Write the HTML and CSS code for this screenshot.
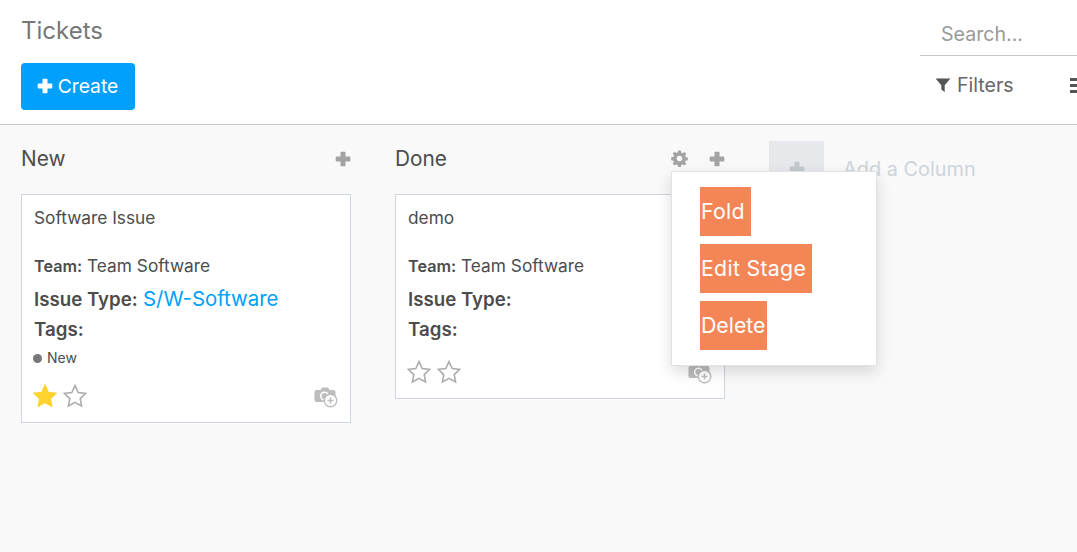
FILE: index.html
```html
<!DOCTYPE html>
<html lang="en">
<head>
    <meta charset="UTF-8">
    <title>Tickets</title>
    <link rel="stylesheet" href="styles.css">
</head>
<body>
<svg class="defs" width="0" height="0">
    <symbol id="plus" viewBox="0 0 16 16"><path d="M5.500 1.500a.8.8 0 0 1 .8-.8h3.400a.8.8 0 0 1 .8.8v4h4a.8.8 0 0 1 .8.8v3.400a.8.8 0 0 1-.8.8h-4v4a.8.8 0 0 1-.8.8H6.300a.8.8 0 0 1-.8-.8v-4h-4a.8.8 0 0 1-.8-.8V6.300a.8.8 0 0 1 .8-.8h4z"/></symbol>
    <symbol id="star" viewBox="0 0 24 24"><path d="M12 1.600l3.200 6.900 7.500.9-5.500 5.200 1.400 7.400L12 18.400 5.400 22l1.400-7.400L1.300 9.400l7.500-.9z"/></symbol>
    <symbol id="camera" viewBox="0 0 24 22"><path fill="#bdbdbd" d="M2.500 4h4L8 1.500h6L15.500 4h4A2 2 0 0 1 21.500 6v9h-19A2 2 0 0 1 .5 13V6A2 2 0 0 1 2.500 4z"/><path fill="#bdbdbd" d="M.5 12h14v4H2.500a2 2 0 0 1-2-2z"/><circle cx="10.500" cy="10" r="3.800" fill="none" stroke="#fff" stroke-width="1.600"/><circle cx="16.500" cy="14.500" r="6.200" fill="#fff" stroke="#bdbdbd" stroke-width="1.400"/><path d="M16.500 11.500v6M13.500 14.500h6" stroke="#bdbdbd" stroke-width="1.400"/></symbol>
</svg>

<header class="top">
    <div class="top-left">
        <h1 class="title">Tickets</h1>
        <button class="btn-create"><svg class="ic-create"><use href="#plus"/></svg>Create</button>
    </div>
    <div class="top-right">
        <div class="search">Search...</div>
        <div class="tools">
            <span class="tool">
                <svg class="ic-filter" viewBox="0 0 16 16"><path d="M.6 1.500h14.800L9.700 8.200V15L6.300 12.400V8.200z"/></svg>Filters
            </span>
            <span class="bars"><i></i><i></i><i></i></span>
        </div>
    </div>
</header>

<main class="board">
    <section class="col">
        <div class="col-head">
            <span class="col-name">New</span>
            <svg class="ic-head"><use href="#plus"/></svg>
        </div>
        <article class="card">
            <div class="card-name">Software Issue</div>
            <div class="team"><b>Team:</b> Team Software</div>
            <div class="field"><b>Issue Type:</b> <a class="link">S/W-Software</a></div>
            <div class="field tags"><b>Tags:</b></div>
            <div class="state"><i class="dot"></i>New</div>
            <div class="card-foot">
                <svg class="star on"><use href="#star"/></svg>
                <svg class="star"><use href="#star"/></svg>
                <svg class="camera"><use href="#camera"/></svg>
            </div>
        </article>
    </section>

    <section class="col">
        <div class="col-head">
            <span class="col-name">Done</span>
            <svg class="ic-gear" viewBox="0 0 16 16"><path fill-rule="evenodd" d="M6.700.5h2.600l.4 2.100 1.100.5 1.800-1.200 1.800 1.800-1.200 1.800.5 1.100 2.100.4v2.600l-2.100.4-.5 1.100 1.200 1.800-1.800 1.800-1.800-1.200-1.100.5-.4 2.100H6.700l-.4-2.100-1.100-.5-1.800 1.200-1.800-1.800 1.200-1.800-.5-1.100-2.100-.4V6.800l2.100-.4.5-1.100-1.200-1.800 1.800-1.800 1.800 1.200 1.100-.5zM8 5.400a2.600 2.600 0 1 0 0 5.200 2.600 2.600 0 0 0 0-5.200z"/></svg>
            <svg class="ic-head"><use href="#plus"/></svg>
        </div>
        <article class="card">
            <div class="card-name">demo</div>
            <div class="team"><b>Team:</b> Team Software</div>
            <div class="field"><b>Issue Type:</b></div>
            <div class="field tags"><b>Tags:</b></div>
            <div class="card-foot foot-done">
                <svg class="star"><use href="#star"/></svg>
                <svg class="star"><use href="#star"/></svg>
                <svg class="camera"><use href="#camera"/></svg>
            </div>
        </article>
        <div class="menu">
            <a class="menu-item wide">Fold</a>
            <a class="menu-item wide">Edit Stage</a>
            <a class="menu-item">Delete</a>
        </div>
    </section>

    <div class="add-col">
        <span class="add-box"><svg class="ic-add"><use href="#plus"/></svg></span>
        <span class="add-text">Add a Column</span>
    </div>
</main>
</body>
</html>
```

FILE: styles.css
```css
*{
    margin:0;
    padding:0;
    box-sizing:border-box;
}
html,body{
    height:100%;
    overflow:hidden;
}
body{
    display:flex;
    flex-direction:column;
    font-family:"Inter","Roboto","Liberation Sans",sans-serif;
    color:#4c4c4c;
    background:#fff;
}
.defs{
    position:absolute;
}
.top{
    height:125px;
    flex:none;
    display:flex;
    justify-content:space-between;
    border-bottom:1px solid #c8c8c8;
    padding-left:21px;
}
.title{
    font-size:24px;
    font-weight:400;
    line-height:30px;
    color:#777;
    margin-top:16px;
}
.btn-create{
    display:flex;
    align-items:center;
    justify-content:center;
    width:114px;
    height:47px;
    margin-top:17px;
    padding:0 1px 2px 0;
    border:0;
    border-radius:4px;
    background:#00a0fc;
    color:#fff;
    font:400 19.300px "Inter","Roboto",sans-serif;
}
.ic-create{
    width:16px;
    height:16px;
    margin-right:5px;
    fill:#fff;
}
.top-right{
    width:157px;
}
.search{
    height:56px;
    padding:22px 0 0 21px;
    border-bottom:1px solid #c8c8c8;
    color:#999;
    font-size:19.600px;
    line-height:24px;
}
.tools{
    display:flex;
    padding:17px 0 0 15px;
    font-size:19.600px;
    line-height:24px;
    color:#666;
}
.tool{
    display:flex;
    align-items:center;
}
.ic-filter{
    width:16px;
    height:16px;
    margin-right:6px;
    fill:#555;
}
.bars{
    display:flex;
    flex-direction:column;
    justify-content:center;
    gap:3px;
    margin-left:56px;
    width:12px;
}
.bars i{
    display:block;
    height:3px;
    background:#555;
}
.board{
    flex:1;
    display:flex;
    gap:44px;
    padding:0 0 0 21px;
    background:#f9f9f9;
}
.col{
    position:relative;
    width:330px;
}
.col-head{
    height:69px;
    display:flex;
    align-items:center;
    padding-bottom:2px;
}
.col-name{
    flex:1;
    margin-top:1px;
    font-size:20.800px;
    line-height:24px;
}
.ic-head{
    width:16px;
    height:16px;
    fill:#a3a3a3;
}
.ic-gear{
    width:17px;
    height:17px;
    margin-right:21px;
    fill:#a3a3a3;
}
.card{
    background:#fff;
    border:1px solid #ced4e0;
    padding:13px 11px 0 12px;
}
.card-name{
    font-size:17.300px;
    line-height:20px;
}
.team{
    margin-top:28px;
    font-size:17.300px;
    line-height:20px;
}
.team b{
    font-size:16.200px;
    font-weight:600;
}
.field{
    font-size:18.700px;
    line-height:24px;
    margin-top:12px;
}
.field b{
    font-weight:600;
}
.field.tags{
    margin-top:6px;
}
.link{
    color:#00a0fc;
    font-size:20.400px;
    line-height:1;
}
.state{
    display:flex;
    align-items:center;
    margin-top:7px;
    margin-left:-1px;
    font-size:14px;
    line-height:18px;
}
.dot{
    width:9px;
    height:9px;
    border-radius:50%;
    background:#777;
    margin-right:5px;
}
.card-foot{
    display:flex;
    align-items:center;
    gap:6px;
    height:38px;
    margin:10px 0 7px -1px;
}
.foot-done{
    margin-top:11px;
}
.star{
    width:24px;
    height:24px;
    fill:#fff;
    stroke:#adadad;
    stroke-width:1.600;
}
.star.on{
    fill:#ffd22e;
    stroke:#ffd22e;
}
.camera{
    width:24px;
    height:22px;
    margin:2px 1px 0 auto;
}
.menu{
    position:absolute;
    left:276px;
    top:46px;
    width:206px;
    height:195px;
    display:flex;
    flex-direction:column;
    align-items:flex-start;
    gap:8px;
    padding:15px 0 0 28px;
    background:#fff;
    border:1px solid #e2e2e2;
    box-shadow:0 6px 14px rgba(0,0,0,.14);
    z-index:2;
}
.menu-item{
    height:49px;
    padding:0 1px;
    background:#f48556;
    color:#fff;
    font-size:21.300px;
    line-height:49px;
}
.menu-item.wide{
    padding-right:6px;
    letter-spacing:.3px;
}
.add-col{
    display:flex;
    align-items:flex-start;
    padding-top:16px;
}
.add-box{
    display:flex;
    align-items:center;
    justify-content:center;
    width:55px;
    height:55px;
    background:#e6e8ec;
}
.ic-add{
    width:16px;
    height:16px;
    fill:#c3c8ce;
}
.add-text{
    margin:16px 0 0 19px;
    font-size:19.900px;
    line-height:24px;
    color:#ced4da;
}
```
